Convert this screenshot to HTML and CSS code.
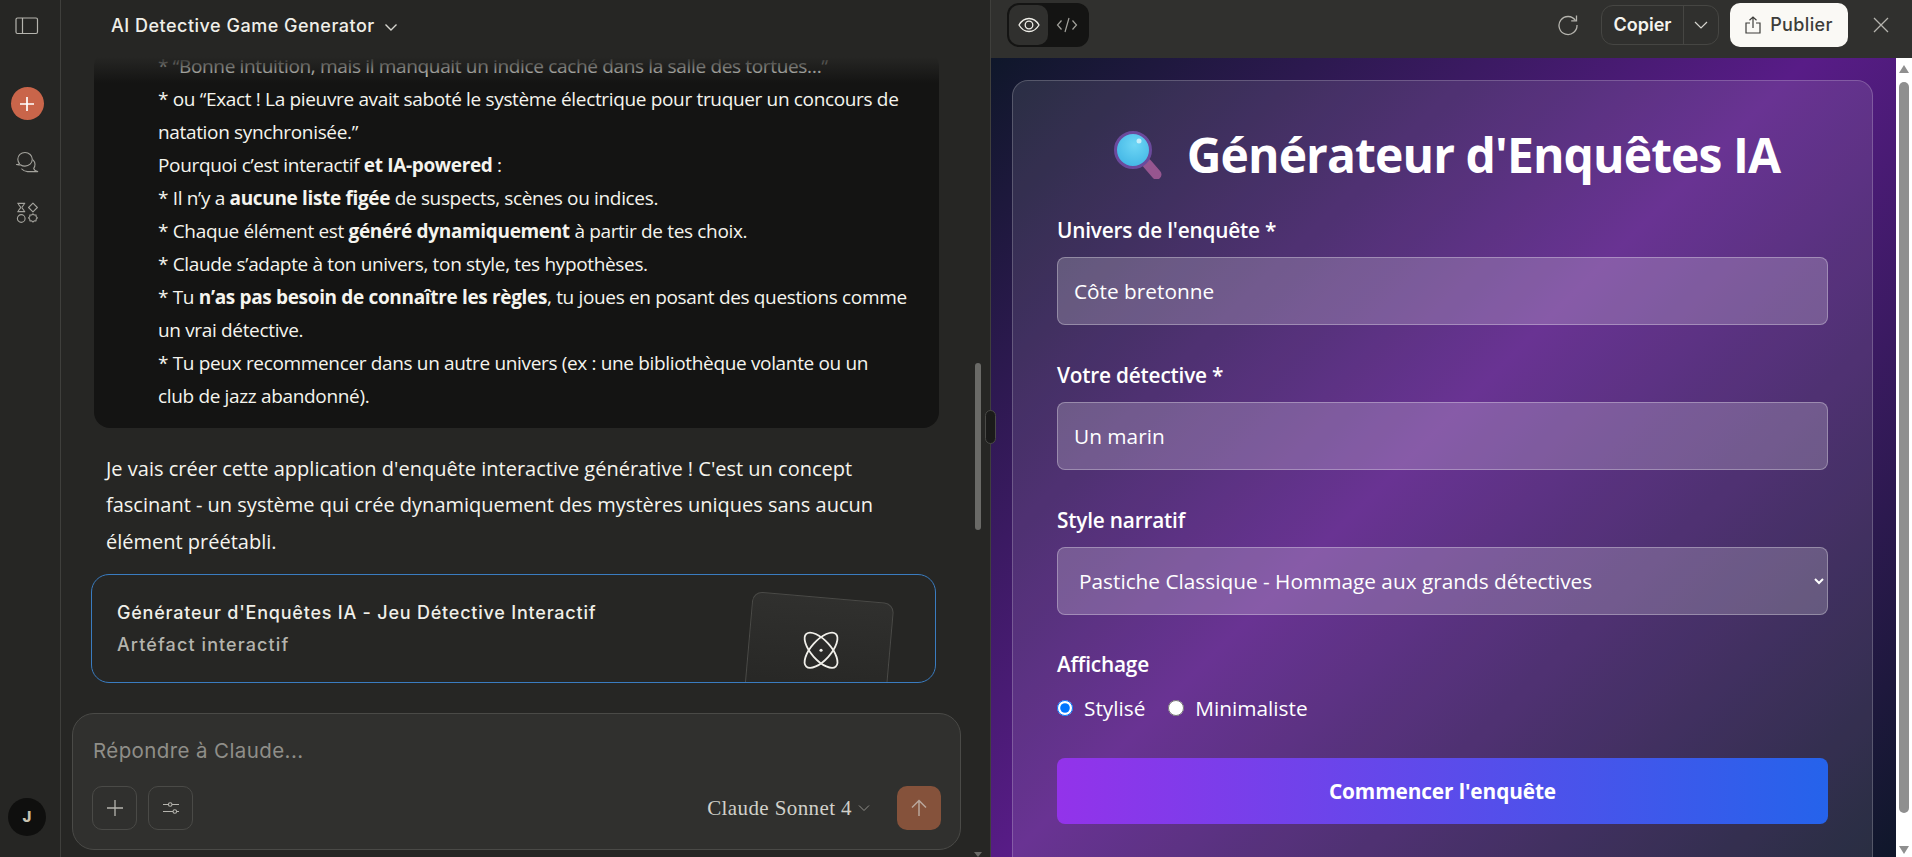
FILE: index.html
```html
<!DOCTYPE html>
<html lang="fr">
<head>
<meta charset="utf-8">
<title>AI Detective Game Generator</title>
<link rel="stylesheet" href="styles.css">
</head>
<body>
<div class="app">
  <aside class="rail">
    <button class="rail-btn panel-toggle" aria-label="Barre latérale">
      <svg width="24" height="18" viewBox="0 0 24 18" fill="none" stroke="#b5b4ae" stroke-width="1.2"><rect x="1" y="1" width="21.5" height="15.5" rx="1.5"/><path d="M7.5 1v15.5"/></svg>
    </button>
    <button class="new-chat" aria-label="Nouvelle conversation">
      <svg width="16" height="16" viewBox="0 0 16 16" stroke="#fff" stroke-width="1.7"><path d="M8 1v14M1 8h14"/></svg>
    </button>
    <button class="rail-btn chats" aria-label="Conversations">
      <svg width="24" height="24" viewBox="0 0 24 24" fill="none" stroke="#a3a29c" stroke-width="1.1" stroke-linejoin="round" stroke-linecap="round"><path d="M1.5 13.5c1.5.2 2.6-.2 3-.9C3.300 11.300 2.800 9.700 2.800 8.300 2.800 4.400 6 1.500 10 1.500s7.300 3 7.300 6.800-3.300 6.800-7.300 6.800c-1.800 0-3.300-.5-4.600-1.400-1 .3-2.600.3-3.900-.2z"/><path d="M18.200 9.200c1.100 1.100 1.800 2.600 1.800 4.100 0 1.500-.4 2.900-1.300 4 .3 1.300 1.400 2.700 4 3.300H12.500c-2.300 0-4.300-1-5.700-2.600"/></svg>
    </button>
    <button class="rail-btn shapes" aria-label="Artéfacts">
      <svg width="22" height="22" viewBox="0 0 24 24" fill="none" stroke="#a3a29c" stroke-width="1.2" stroke-linejoin="round"><path d="M1.500 1.500h8.500M1.500 10.500h8.500M2.500 1.700c0 2.200 2.500 2.800 2.500 4.300S2.500 8.300 2.500 10.300M9 1.700c0 2.200-2.500 2.800-2.500 4.300S9 8.300 9 10.300"/><path d="M18.500 1.200l4.800 4.800-4.800 4.800L13.700 6z"/><circle cx="5.700" cy="18" r="4.200"/><path d="M18.500 13l1.400 1.200 1.900-.1.200 1.900 1.300 1.400-1.300 1.400-.2 1.900-1.900-.1-1.400 1.200-1.400-1.200-1.900.1-.2-1.900-1.300-1.400 1.300-1.400.2-1.900 1.900.1z"/></svg>
    </button>
    <div class="avatar">J</div>
  </aside>

  <main class="chat">
    <header class="chat-head">
      <span class="chat-title">AI Detective Game Generator</span>
      <svg class="chat-chev" width="14" height="9" viewBox="0 0 14 9" fill="none" stroke="#d6d5cf" stroke-width="1.4"><path d="M1.500 1.500 7 7l5.500-5.500"/></svg>
    </header>
    <div class="thread">
      <div class="user-msg">
        <p>* “Bonne intuition, mais il manquait un indice caché dans la salle des tortues…”</p>
        <p>* ou “Exact ! La pieuvre avait saboté le système électrique pour truquer un concours de natation synchronisée.”</p>
        <p>Pourquoi c’est interactif <b>et IA-powered</b> :</p>
        <p>* Il n’y a <b>aucune liste figée</b> de suspects, scènes ou indices.</p>
        <p>* Chaque élément est <b>généré dynamiquement</b> à partir de tes choix.</p>
        <p>* Claude s’adapte à ton univers, ton style, tes hypothèses.</p>
        <p>* Tu <b>n’as pas besoin de connaître les règles</b>, tu joues en posant des questions comme un vrai détective.</p>
        <p>* Tu peux recommencer dans un autre univers (ex : une bibliothèque volante ou un club de jazz abandonné).</p>
      </div>
      <p class="reply">Je vais créer cette application d'enquête interactive générative ! C'est un concept fascinant - un système qui crée dynamiquement des mystères uniques sans aucun élément préétabli.</p>
      <div class="artifact">
        <div class="artifact-text">
          <div class="artifact-title">Générateur d'Enquêtes IA - Jeu Détective Interactif</div>
          <div class="artifact-sub">Artéfact interactif</div>
        </div>
        <div class="artifact-thumb">
          <svg width="44" height="44" viewBox="0 0 36 36" fill="none" stroke="#f0efe9" stroke-width="1.5"><ellipse cx="18" cy="18" rx="8" ry="18" transform="rotate(-42 18 18)"/><ellipse cx="18" cy="18" rx="8" ry="18" transform="rotate(42 18 18)"/><circle cx="18" cy="18" r="1.300" fill="#f0efe9" stroke="none"/></svg>
        </div>
      </div>
    </div>
    <div class="thread-fade"></div>
    <div class="composer">
      <div class="placeholder">Répondre à Claude...</div>
      <div class="composer-row">
        <button class="tool-btn" aria-label="Ajouter">
          <svg width="18" height="18" viewBox="0 0 18 18" stroke="#b5b4ae" stroke-width="1.3"><path d="M9 1v16M1 9h16"/></svg>
        </button>
        <button class="tool-btn" aria-label="Réglages">
          <svg width="18" height="16" viewBox="0 0 18 16" fill="none" stroke="#b5b4ae" stroke-width="1.1"><path d="M1 4.500h5.500M10 4.500h7M1 11.500h10M14.500 11.500H17"/><circle cx="8.200" cy="4.500" r="1.800"/><circle cx="12.800" cy="11.500" r="1.800"/></svg>
        </button>
        <div class="model">Claude Sonnet 4
          <svg width="12" height="8" viewBox="0 0 12 8" fill="none" stroke="#8f8e89" stroke-width="1"><path d="M1 1.500 6 6.500l5-5"/></svg>
        </div>
        <button class="send" aria-label="Envoyer">
          <svg width="16" height="18" viewBox="0 0 16 18" fill="none" stroke="#b9a79c" stroke-width="1.500"><path d="M8 17V1.500M1 8.500l7-7 7 7"/></svg>
        </button>
      </div>
    </div>
    <div class="chat-thumb"></div>
    <div class="chat-arrow"></div>
    <div class="handle"></div>
  </main>

  <section class="panel">
    <header class="panel-head">
      <div class="view-toggle">
        <button class="view-btn active" aria-label="Aperçu">
          <svg width="22" height="16" viewBox="0 0 22 16" fill="none" stroke="#f0efe9" stroke-width="1.300"><path d="M1 8c2.500-4.300 6-6.500 10-6.500S18.500 3.700 21 8c-2.500 4.300-6 6.500-10 6.500S3.500 12.300 1 8z"/><circle cx="11" cy="8" r="3.800"/></svg>
        </button>
        <button class="view-btn" aria-label="Code">
          <svg width="22" height="16" viewBox="0 0 22 16" fill="none" stroke="#a3a29c" stroke-width="1.200"><path d="M5.500 3.500 1.500 8l4 4.500M16.500 3.500l4 4.500-4 4.500M13 1 9 15"/></svg>
        </button>
      </div>
      <div class="panel-actions">
        <svg class="refresh" width="22" height="22" viewBox="0 0 22 22" fill="none" stroke="#b5b4ae" stroke-width="1.300"><path d="M18.500 6.500A9 9 0 1 0 20 11"/><path d="M19.500 1.500v5.300h-5.300"/></svg>
        <div class="copy-group">
          <span class="copy-label">Copier</span>
          <span class="copy-arrow"><svg width="14" height="8" viewBox="0 0 14 8" fill="none" stroke="#d6d5cf" stroke-width="1.200"><path d="M1 1l6 6 6-6"/></svg></span>
        </div>
        <button class="publish">
          <svg width="16" height="18" viewBox="0 0 16 18" fill="none" stroke="#3d3d3a" stroke-width="1.200"><path d="M5 7H1v10h14V7h-4M8 12V1M4.500 4.200 8 1l3.500 3.200"/></svg>
          Publier
        </button>
        <svg class="close" width="18" height="18" viewBox="0 0 18 18" stroke="#b5b4ae" stroke-width="1.300"><path d="M2 2l14 14M16 2 2 16"/></svg>
      </div>
    </header>
    <div class="viewer">
      <div class="stage">
        <form class="card">
          <h1 class="card-title">
            <svg class="lens" width="48" height="48" viewBox="0 0 48 48"><defs><radialGradient id="lens-glass" cx="55%" cy="35%" r="70%"><stop offset="0" stop-color="#6ed6f5"/><stop offset="1" stop-color="#3fb4e4"/></radialGradient></defs><path d="M33 32.500 42.500 43.500" stroke="#96568f" stroke-width="10" stroke-linecap="round"/><circle cx="19" cy="19" r="17.500" fill="url(#lens-glass)" stroke="#6b4a9c" stroke-width="3"/><circle cx="25" cy="10" r="2.500" fill="#c4eefa"/></svg>
            Générateur d'Enquêtes IA
          </h1>
          <label class="field">
            <span class="field-label">Univers de l'enquête *</span>
            <input class="control" type="text" value="Côte bretonne">
          </label>
          <label class="field">
            <span class="field-label">Votre détective *</span>
            <input class="control" type="text" value="Un marin">
          </label>
          <label class="field field-tight">
            <span class="field-label">Style narratif</span>
            <select class="control select"><option>Pastiche Classique - Hommage aux grands détectives</option></select>
          </label>
          <div class="field">
            <span class="field-label">Affichage</span>
            <div class="radios">
              <label class="radio"><input type="radio" name="display" checked> Stylisé</label>
              <label class="radio"><input type="radio" name="display"> Minimaliste</label>
            </div>
          </div>
          <button class="start" type="button">Commencer l'enquête</button>
        </form>
      </div>
      <div class="scrollbar">
        <span class="sb-up"></span>
        <span class="sb-thumb"></span>
        <span class="sb-down"></span>
      </div>
    </div>
  </section>
</div>
</body>
</html>
```
FILE: styles.css
```css
* { box-sizing: border-box; }
html, body { margin: 0; height: 100%; overflow: hidden; }
body { background: #262624; color: #f5f4ee; font-family: "Open Sans", "Noto Sans", sans-serif; }
button { border: 0; background: none; padding: 0; margin: 0; font: inherit; color: inherit; display: flex; align-items: center; justify-content: center; }
p { margin: 0; }
.app { display: flex; height: 857px; width: 1912px; overflow: hidden; }

/* left rail */
.rail { width: 61px; flex: none; border-right: 1px solid #3f3f3c; display: flex; flex-direction: column; align-items: center; background: #262624; padding-right: 6px; }
.rail-btn { width: 30px; height: 30px; }
.panel-toggle { margin-top: 11px; }
.new-chat { width: 33px; height: 33px; border-radius: 50%; background: #c9654a; margin-top: 46px; }
.chats { margin-top: 28px; }
.shapes { margin-top: 20px; }
.avatar { margin-top: auto; margin-bottom: 21px; width: 38px; height: 38px; border-radius: 50%; background: #0f0f0e; color: #c9c3b1; font: 800 15px/38px "Inter", sans-serif; text-align: center; }

/* chat column */
.chat { position: relative; width: 929px; flex: none; display: flex; flex-direction: column; height: 857px; }
.chat-head { height: 57px; flex: none; display: flex; align-items: center; padding: 0 0 5px 50px; gap: 9px; }
.chat-title { font: 500 18px/24px "Inter", sans-serif; letter-spacing: 0.5px; color: #f0efe9; }
.chat-chev { margin-top: 2px; }
.thread { height: 626px; flex: none; overflow: hidden; display: flex; flex-direction: column; justify-content: flex-end; padding: 0 54px 0 30px; }
.thread-fade { position: absolute; left: 33px; top: 57px; width: 845px; height: 26px; background: linear-gradient(#262624, rgba(38,38,36,0)); }
.user-msg { flex: none; margin: 0 -3px 0 3px; background: #141413; border-radius: 16px; padding: 0 31px 15px 64px; font-size: 19px; line-height: 33px; letter-spacing: -0.34px; color: #f5f4ee; }
.user-msg b { font-weight: 700; }
.reply { flex: none; margin: 23px 0 0 15px; width: 790px; font-size: 20px; line-height: 36.5px; color: #f5f4ee; }
.artifact { flex: none; position: relative; overflow: hidden; margin-top: 14px; height: 109px; border: 1px solid #3a7cc0; border-radius: 18px; padding: 26px 0 0 25px; background: #262624; }
.artifact-title { font: 500 18px/24px "Inter", sans-serif; letter-spacing: 0.78px; color: #f0efe9; }
.artifact-sub { margin-top: 8px; font: 500 18px/24px "Inter", sans-serif; letter-spacing: 1.1px; color: #b5b4ae; }
.artifact-thumb { position: absolute; left: 655px; top: 22px; width: 142px; height: 130px; border: 1px solid #4a4a47; border-radius: 10px; background: linear-gradient(#30302e, #242422); transform: rotate(5deg); display: flex; justify-content: center; padding: 30px 0 0 4px; }
.artifact-thumb svg { transform: rotate(-5deg); }

.composer { position: absolute; left: 11px; top: 713px; width: 889px; height: 137px; background: #30302e; border: 1px solid #4a4a47; border-radius: 22px; padding: 22px 19px 0 20px; }
.placeholder { font: 400 20.500px/30px "Inter", sans-serif; letter-spacing: 0.4px; color: #8f8e89; }
.composer-row { display: flex; align-items: center; gap: 11px; margin-top: 20px; margin-left: -1px; }
.tool-btn { width: 45px; height: 44px; border: 1px solid #4a4a47; border-radius: 10px; }
.model { margin-left: auto; display: flex; align-items: center; gap: 6px; font: 400 21px/24px "Liberation Serif", serif; letter-spacing: 0.4px; color: #d1d0ca; margin-right: 16px; padding-bottom: 1px; }
.send { width: 44px; height: 44px; border-radius: 10px; background: #85523b; margin-left: 0; }

.chat-thumb { position: absolute; left: 914px; top: 363px; width: 6px; height: 167px; border-radius: 3px; background: #6a6a67; }
.chat-arrow { position: absolute; left: 913px; top: 852px; border: 4px solid transparent; border-top: 5px solid #6a6a67; }
.handle { position: absolute; left: 924px; top: 410px; width: 11px; height: 34px; border-radius: 6px; background: #1b1b1a; border: 1px solid #4a4a47; z-index: 2; }

/* artifact panel */
.panel { flex: 1; min-width: 0; display: flex; flex-direction: column; border-left: 1px solid #3f3f3c; }
.panel-head { height: 58px; flex: none; background: #30302e; display: flex; align-items: center; justify-content: space-between; padding: 0 22px 8px 16px; }
.view-toggle { display: flex; width: 82px; height: 44px; background: #141413; border-radius: 12px; padding: 2px; }
.view-btn { width: 39px; height: 40px; border-radius: 10px; }
.view-btn.active { background: #30302e; margin-right: -1px; }
.view-btn:last-child { flex: 1; }
.panel-actions { display: flex; align-items: center; }
.refresh { margin-right: 22px; }
.copy-group { display: flex; width: 118px; height: 40px; border: 1px solid #464643; border-radius: 12px; font: 600 18px/38px "Inter", sans-serif; color: #f5f4ee; }
.copy-label { flex: 1; text-align: center; border-right: 1px solid #464643; }
.copy-arrow { width: 34px; display: flex; align-items: center; justify-content: center; }
.publish { width: 118px; height: 44px; margin-left: 11px; gap: 9px; border-radius: 10px; background: #faf9f5; color: #3d3d3a; font: 500 18px/24px "Inter", sans-serif; letter-spacing: 0.35px; }
.close { margin-left: 24px; }

.viewer { flex: 1; display: flex; min-height: 0; overflow: hidden; }
.stage { flex: 1; min-width: 0; overflow: hidden; padding: 22px 23px 0 21px; background: linear-gradient(135deg, #0f172a 0%, #581c87 48%, #0f172a 100%); }
.card { border: 1px solid rgba(255,255,255,.2); border-radius: 16px; background: rgba(255,255,255,.1); height: 900px; padding: 40px 44px 0; }
.card-title { margin: 0 0 27px; padding-left: 9px; display: flex; align-items: center; justify-content: center; gap: 25px; font-size: 48px; line-height: 68px; font-weight: 700; letter-spacing: -0.9px; color: #fff; }
.lens { flex: none; }
.field { display: block; margin-bottom: 36px; }
.field-tight { margin-bottom: 35px; }
.field-label { display: block; font-size: 20.800px; line-height: 28px; font-weight: 600; letter-spacing: -0.2px; color: #fff; margin-bottom: 13px; }
.control { display: block; width: 100%; height: 68px; padding: 0 16px; border: 1px solid rgba(255,255,255,.3); border-radius: 8px; background: rgba(255,255,255,.2); color: #fff; font: 400 20.800px/28px "Open Sans", sans-serif; outline: 0; }
.select { padding-left: 17px; }
.select option { color: #000; }
.radios { display: flex; gap: 23px; padding-top: 3px; height: 31px; }
.radio { display: flex; align-items: center; gap: 11px; font-size: 20.800px; color: #fff; }
.radio input { margin: 0; width: 16px; height: 16px; accent-color: #0075ff; }
.start { width: 100%; height: 66px; border-radius: 8px; background: linear-gradient(90deg, #9333ea, #2563eb); color: #fff; font-size: 20.800px; font-weight: 700; letter-spacing: -0.1px; margin-top: 0; }

.scrollbar { width: 16px; flex: none; background: #fff; position: relative; display: block; }
.sb-up { position: absolute; left: 3px; top: 7px; border: 5px solid transparent; border-top: 0; border-bottom: 8px solid #8f8f8f; }
.sb-thumb { position: absolute; left: 3px; top: 24px; width: 10px; height: 731px; border-radius: 5px; background: #8f8f8f; }
.sb-down { position: absolute; right: 3px; bottom: 3px; border: 5px solid transparent; border-bottom: 0; border-top: 8px solid #8f8f8f; }
```
